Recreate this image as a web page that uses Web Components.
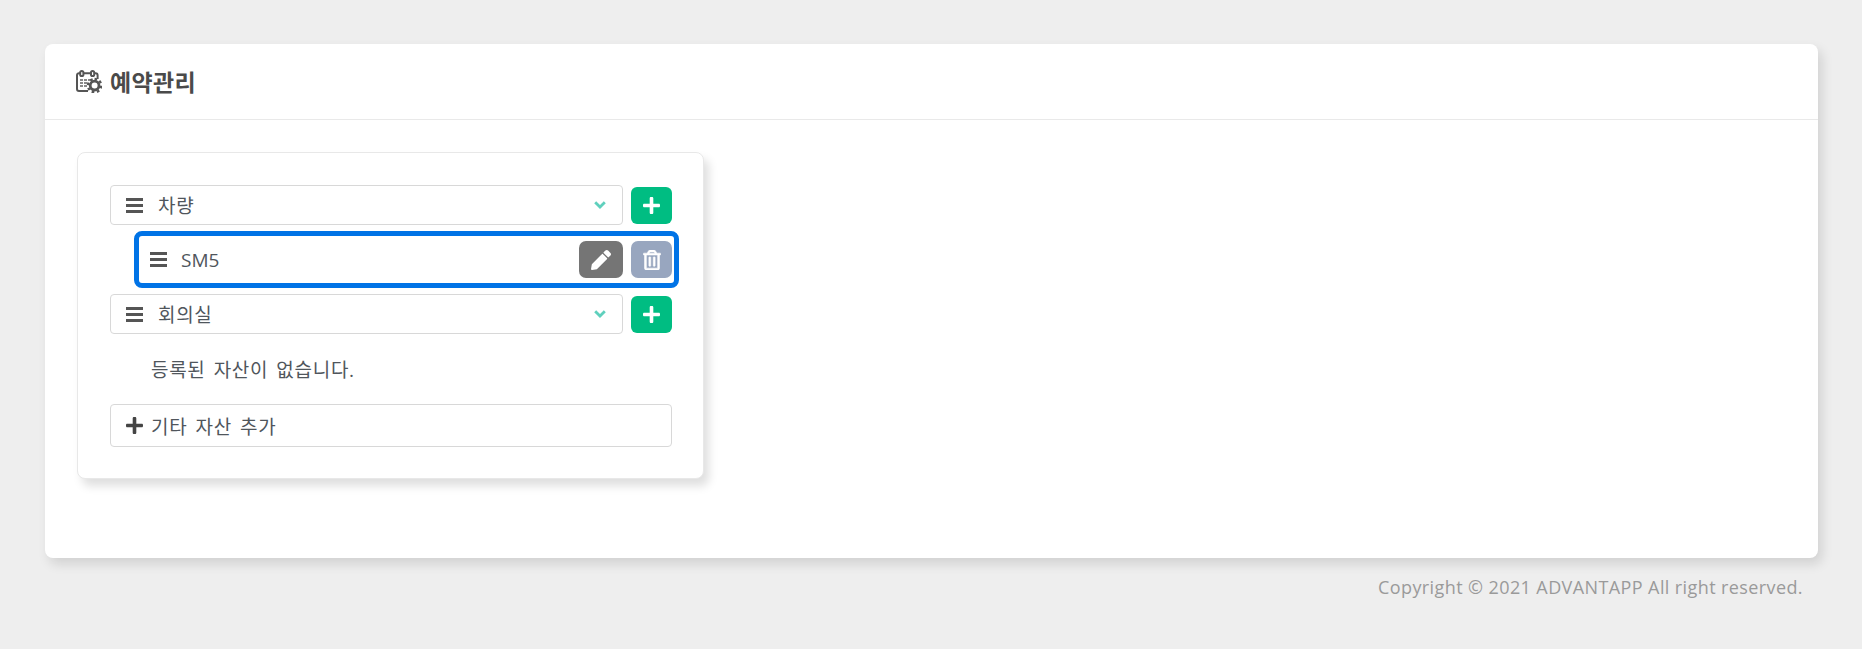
<!DOCTYPE html>
<html lang="ko">
<head>
<meta charset="utf-8">
<title>예약관리</title>
<style>
    html,body{ margin:0; height:100%; }
    body{
        background:#eeeeee;
        font-family:'Open Sans','Noto Sans CJK KR',sans-serif;
        color:#50565c;
    }
</style>
</head>
<body>
<resv-page>
    <resv-panel>
        <span slot="title">예약관리</span>
        <asset-box>
            <asset-select>차량</asset-select>
            <asset-item>SM5</asset-item>
            <asset-select>회의실</asset-select>
            <asset-empty>등록된 자산이 없습니다.</asset-empty>
            <asset-add>기타 자산 추가</asset-add>
        </asset-box>
    </resv-panel>
    <span slot="footer">Copyright © 2021 ADVANTAPP All right reserved.</span>
</resv-page>

<script>
// ICONS
const ICONS = {
    bars:`<svg viewBox="0 0 17 15" width="17" height="15"><path fill="#555" d="M0 0h17v3H0zM0 6h17v3H0zM0 12h17v3H0z"/></svg>`,
    plus:`<svg viewBox="0 0 16 16" width="17" height="17"><path fill="currentColor" d="M6.3 1.2C6.3.5 6.8 0 7.5 0h1c.7 0 1.2.5 1.2 1.2v5.1h5.1c.7 0 1.2.5 1.2 1.2v1c0 .7-.5 1.2-1.2 1.2H9.7v5.1c0 .7-.5 1.2-1.2 1.2h-1c-.7 0-1.2-.5-1.2-1.2V9.7H1.2C.5 9.7 0 9.2 0 8.5v-1c0-.7.5-1.2 1.2-1.2h5.1z"/></svg>`,
    chevron:`<svg viewBox="0 0 12 8" width="12" height="8"><path fill="none" stroke="#5fd0bd" stroke-width="2.8" d="M1.2 1.2 6 6l4.8-4.8"/></svg>`,
    pencil:`<svg viewBox="0 0 512 512" width="20" height="20"><path fill="#fff" d="M497.9 142.1l-46.1 46.1c-4.7 4.7-12.3 4.7-17 0l-111-111c-4.7-4.7-4.7-12.3 0-17l46.1-46.1c18.7-18.7 49.1-18.7 67.9 0l60.1 60.1c18.8 18.7 18.8 49.1 0 67.9zM284.2 99.8L21.6 362.4.4 483.9c-2.9 16.4 11.4 30.6 27.8 27.8l121.5-21.3 262.6-262.6c4.7-4.7 4.7-12.3 0-17l-111-111c-4.8-4.7-12.4-4.7-17.1 0z"/></svg>`,
    trash:`<svg viewBox="0 0 448 512" width="18" height="20"><path fill="#fff" stroke="#fff" stroke-width="14" d="M268 416h24a12 12 0 0 0 12-12V188a12 12 0 0 0-12-12h-24a12 12 0 0 0-12 12v216a12 12 0 0 0 12 12zM432 80h-82.41l-34-56.7A48 48 0 0 0 274.41 0H173.59a48 48 0 0 0-41.16 23.3L98.41 80H16A16 16 0 0 0 0 96v16a16 16 0 0 0 16 16h16v336a48 48 0 0 0 48 48h288a48 48 0 0 0 48-48V128h16a16 16 0 0 0 16-16V96a16 16 0 0 0-16-16zM171.84 50.91A6 6 0 0 1 177 48h94a6 6 0 0 1 5.15 2.91L293.61 80H154.39zM368 464H80V128h288zm-212-48h24a12 12 0 0 0 12-12V188a12 12 0 0 0-12-12h-24a12 12 0 0 0-12 12v216a12 12 0 0 0 12 12z"/></svg>`,
    calendar:`<svg viewBox="0 0 26 23" width="26" height="23"><g fill="none" stroke="#555" stroke-width="2"><path d="M12 21H3a2 2 0 0 1-2-2V5.2a2 2 0 0 1 2-2h16.6a2 2 0 0 1 2 2V9"/><rect x="4.2" y="1" width="3.2" height="5" rx="1.6" fill="#fff"/><rect x="15" y="1" width="3.2" height="5" rx="1.6" fill="#fff"/></g><path fill="#8a8a8a" d="M4 9h3v2H4zM8 9h3v2H8zM12 9h3v2h-3zM4 12h3v2H4zM8 12h3v2H8zM4 15h3v2H4zM8 15h3v2H8z"/><circle cx="18.6" cy="15.6" r="4.4" fill="#fff" stroke="#555" stroke-width="2.8"/><path stroke="#555" stroke-width="2.4" stroke-dasharray="2.6 2.6" fill="none" d="M18.6 9a6.6 6.6 0 1 1-.01 0z"/></svg>`
};

// PAGE
const pageTemplate = document.createElement('template');
pageTemplate.innerHTML = `
<style>
    :host{ display:block; padding:44px 44px 0 45px; }
    footer{
        padding:17px 15px 0 0;
        text-align:right;
        font-size:18px;
        letter-spacing:.4px;
        line-height:24px;
        color:#9a9a9a;
    }
</style>
<slot></slot>
<footer><slot name="footer"></slot></footer>
`;
class ResvPage extends HTMLElement{
    constructor(){
        super();
        this.attachShadow({mode:'open'});
        this.shadowRoot.appendChild(pageTemplate.content.cloneNode(true));
    }
}

// PANEL
const panelTemplate = document.createElement('template');
panelTemplate.innerHTML = `
<style>
    :host{
        display:block;
        height:514px;
        background:white;
        border-radius:8px;
        box-shadow:4px 6px 12px rgb(0 0 0 / 12%);
        overflow:hidden;
    }
    header{
        height:76px;
        box-sizing:border-box;
        border-bottom:1px solid #e9e9e9;
        padding:0 31px 1px;
        display:flex;
        align-items:center;
        gap:8px;
        font-size:23px;
        letter-spacing:.3px;
        font-weight:700;
        color:#4a4a4a;
    }
    svg{ display:block; }
    .body{ padding:32px 33px 32px 32px; }
</style>
<header><span id="icon"></span><slot name="title"></slot></header>
<div class="body"><slot></slot></div>
`;
class ResvPanel extends HTMLElement{
    constructor(){
        super();
        this.attachShadow({mode:'open'});
        this.shadowRoot.appendChild(panelTemplate.content.cloneNode(true));
        this.shadowRoot.querySelector('#icon').innerHTML = ICONS.calendar;
    }
}

// ASSET BOX
const boxTemplate = document.createElement('template');
boxTemplate.innerHTML = `
<style>
    :host{
        display:block;
        width:627px;
        height:327px;
        box-sizing:border-box;
        padding:32px 31px 0 32px;
        background:white;
        border:1px solid #e8e8e8;
        border-radius:8px;
        box-shadow:5px 7px 10px rgb(0 0 0 / 13%);
        font-size:19px;
        letter-spacing:.7px;
        word-spacing:2.5px;
    }
</style>
<slot></slot>
`;
class AssetBox extends HTMLElement{
    constructor(){
        super();
        this.attachShadow({mode:'open'});
        this.shadowRoot.appendChild(boxTemplate.content.cloneNode(true));
    }
}

// SELECT ROW
const selectTemplate = document.createElement('template');
selectTemplate.innerHTML = `
<style>
    :host{
        display:flex;
        align-items:center;
        gap:8px;
        height:40px;
        margin-bottom:6px;
    }
    .select{
        flex:1;
        height:100%;
        box-sizing:border-box;
        display:flex;
        align-items:center;
        gap:15px;
        padding:0 16px 0 15px;
        background:white;
        border:1px solid #d8d8d8;
        border-radius:4px;
    }
    .text{ flex:1; }
    .add{
        width:41px;
        height:37px;
        display:flex;
        align-items:center;
        justify-content:center;
        background:#00bd82;
        color:white;
        border-radius:6px;
    }
    svg{ display:block; }
</style>
<div class="select">
    <span id="bars"></span>
    <span class="text"><slot></slot></span>
    <span id="chevron"></span>
</div>
<div class="add" id="add"></div>
`;
class AssetSelect extends HTMLElement{
    constructor(){
        super();
        this.attachShadow({mode:'open'});
        this.shadowRoot.appendChild(selectTemplate.content.cloneNode(true));
        this.shadowRoot.querySelector('#bars').innerHTML = ICONS.bars;
        this.shadowRoot.querySelector('#chevron').innerHTML = ICONS.chevron;
        this.shadowRoot.querySelector('#add').innerHTML = ICONS.plus;
    }
}

// SELECTED ITEM
const itemTemplate = document.createElement('template');
itemTemplate.innerHTML = `
<style>
    :host{
        display:flex;
        align-items:center;
        gap:8px;
        height:57px;
        box-sizing:border-box;
        margin:0 -7px 6px 24px;
        padding:0 2px 0 11px;
        border:5px solid #0073e6;
        border-radius:8px;
        letter-spacing:0;
    }
    .text{ flex:1; margin-left:6px; }
    .btn{
        height:37px;
        display:flex;
        align-items:center;
        justify-content:center;
        border-radius:7px;
    }
    .edit{ width:44px; background:#757575; }
    .del{ width:41px; background:#98a6bf; }
    svg{ display:block; }
</style>
<span id="bars"></span>
<span class="text"><slot></slot></span>
<div class="btn edit" id="edit"></div>
<div class="btn del" id="del"></div>
`;
class AssetItem extends HTMLElement{
    constructor(){
        super();
        this.attachShadow({mode:'open'});
        this.shadowRoot.appendChild(itemTemplate.content.cloneNode(true));
        this.shadowRoot.querySelector('#bars').innerHTML = ICONS.bars;
        this.shadowRoot.querySelector('#edit').innerHTML = ICONS.pencil;
        this.shadowRoot.querySelector('#del').innerHTML = ICONS.trash;
    }
}

// EMPTY MESSAGE
const emptyTemplate = document.createElement('template');
emptyTemplate.innerHTML = `
<style>
    :host{
        display:block;
        height:64px;
        padding:14px 0 0 41px;
        box-sizing:border-box;
        line-height:32px;
    }
</style>
<slot></slot>
`;
class AssetEmpty extends HTMLElement{
    constructor(){
        super();
        this.attachShadow({mode:'open'});
        this.shadowRoot.appendChild(emptyTemplate.content.cloneNode(true));
    }
}

// ADD BUTTON
const addTemplate = document.createElement('template');
addTemplate.innerHTML = `
<style>
    :host{
        display:flex;
        align-items:center;
        gap:8px;
        height:43px;
        box-sizing:border-box;
        padding:0 15px;
        background:white;
        border:1px solid #d8d8d8;
        border-radius:4px;
    }
    #icon{ color:#444; }
    svg{ display:block; }
</style>
<span id="icon"></span>
<slot></slot>
`;
class AssetAdd extends HTMLElement{
    constructor(){
        super();
        this.attachShadow({mode:'open'});
        this.shadowRoot.appendChild(addTemplate.content.cloneNode(true));
        this.shadowRoot.querySelector('#icon').innerHTML = ICONS.plus;
    }
}

window.customElements.define('resv-page', ResvPage);
window.customElements.define('resv-panel', ResvPanel);
window.customElements.define('asset-box', AssetBox);
window.customElements.define('asset-select', AssetSelect);
window.customElements.define('asset-item', AssetItem);
window.customElements.define('asset-empty', AssetEmpty);
window.customElements.define('asset-add', AssetAdd);
</script>
</body>
</html>
